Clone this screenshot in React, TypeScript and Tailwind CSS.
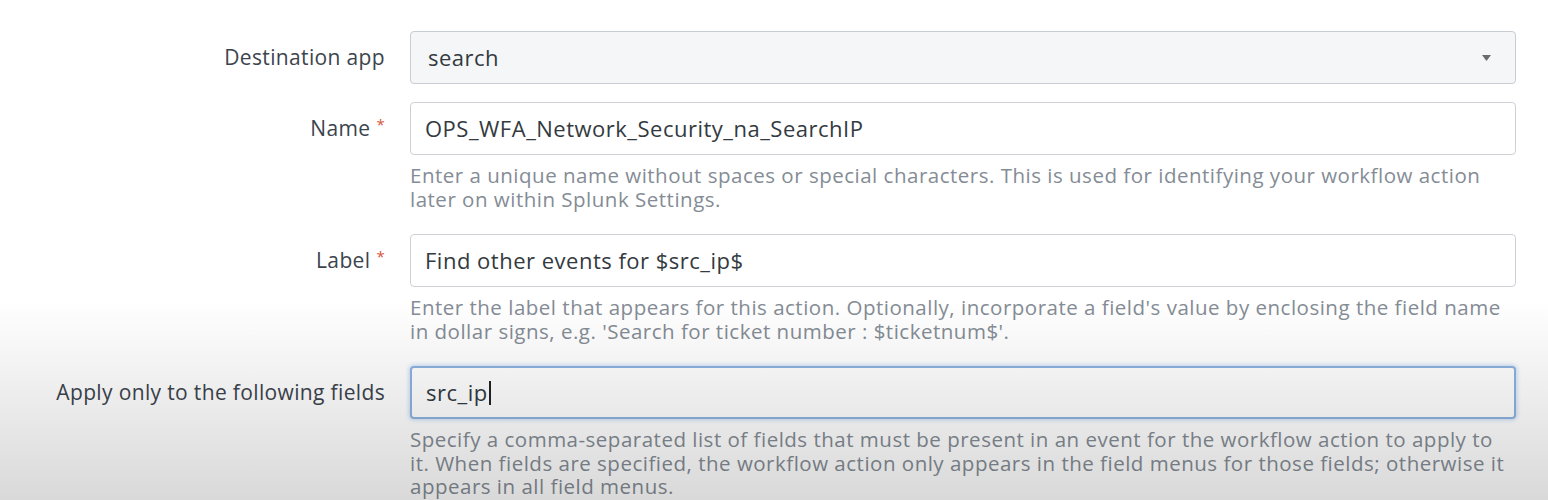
import React from "react";

interface Field {
  label: string;
  required?: boolean;
  value: string;
  help?: string;
  kind: "select" | "input" | "focused";
}

const fields: Field[] = [
  { label: "Destination app", value: "search", kind: "select" },
  {
    label: "Name",
    required: true,
    value: "OPS_WFA_Network_Security_na_SearchIP",
    kind: "input",
    help: "Enter a unique name without spaces or special characters. This is used for identifying your workflow action later on within Splunk Settings.",
  },
  {
    label: "Label",
    required: true,
    value: "Find other events for $src_ip$",
    kind: "input",
    help: "Enter the label that appears for this action. Optionally, incorporate a field's value by enclosing the field name in dollar signs, e.g. 'Search for ticket number : $ticketnum$'.",
  },
  {
    label: "Apply only to the following fields",
    value: "src_ip",
    kind: "focused",
    help: "Specify a comma-separated list of fields that must be present in an event for the workflow action to apply to it. When fields are specified, the workflow action only appears in the field menus for those fields; otherwise it appears in all field menus.",
  },
];

const boxBase =
  "flex items-center h-[53px] rounded-[4px] border px-[14px] text-[22px] tracking-[0.5px] text-[#333a40]";

const App = () => {
  return (
    <div
      className="relative w-[1548px] h-[500px] overflow-hidden bg-white"
      style={{ fontFamily: '"Open Sans", "Liberation Sans", sans-serif' }}
    >
      <div className="grid grid-cols-[385px_1106px] gap-x-[25px] pt-[31px]">
        {fields.map((f, i) => (
          <React.Fragment key={f.label}>
            {/* Label */}
            <div
              className={`flex items-center justify-end h-[53px] text-[21px] tracking-[0.35px] text-[#3c444d] ${
                i === 1 ? "mt-[18px]" : ""
              } ${i > 1 ? "mt-[23px]" : ""}`}
            >
              <span>{f.label}</span>
              {f.required && (
                <span className="ml-[6px] mb-[8px] text-[#d6563c] text-[15px]">*</span>
              )}
            </div>

            {/* Control */}
            <div className={`${i === 1 ? "mt-[18px]" : ""} ${i > 1 ? "mt-[23px]" : ""}`}>
              {f.kind === "select" && (
                <div
                  className={`${boxBase} justify-between bg-[#f5f6f8] border-[#c8cdd3] pl-[17px] pr-[24px] text-[#5c6773]`}
                >
                  <span>{f.value}</span>
                  <svg width="9" height="6" viewBox="0 0 9 6">
                    <path d="M0 0 L9 0 L4.5 6 Z" fill="#6b6b6b" />
                  </svg>
                </div>
              )}
              {f.kind === "input" && (
                <div className={`${boxBase} bg-white border-[#cdd1d6]`}>
                  <span>{f.value}</span>
                </div>
              )}
              {f.kind === "focused" && (
                <div
                  className={`${boxBase} bg-white border-[#8db3e0] border-[2px] px-[13px] shadow-[0_0_4px_1px_rgba(120,170,230,0.45)]`}
                >
                  <span>{f.value}</span>
                  <span className="w-[2px] h-[24px] bg-[#222] ml-[1px]" />
                </div>
              )}
              {f.help && (
                <p className="mt-[9px] text-[20.5px] tracking-[0.5px] leading-[23.5px] text-[#848c95] pr-[5px]">
                  {f.help}
                </p>
              )}
            </div>
          </React.Fragment>
        ))}
      </div>

      {/* video shade at the bottom */}
      <div className="pointer-events-none absolute inset-x-0 bottom-0 h-[200px] bg-linear-to-b from-transparent to-black/15" />
    </div>
  );
};

export default App;
